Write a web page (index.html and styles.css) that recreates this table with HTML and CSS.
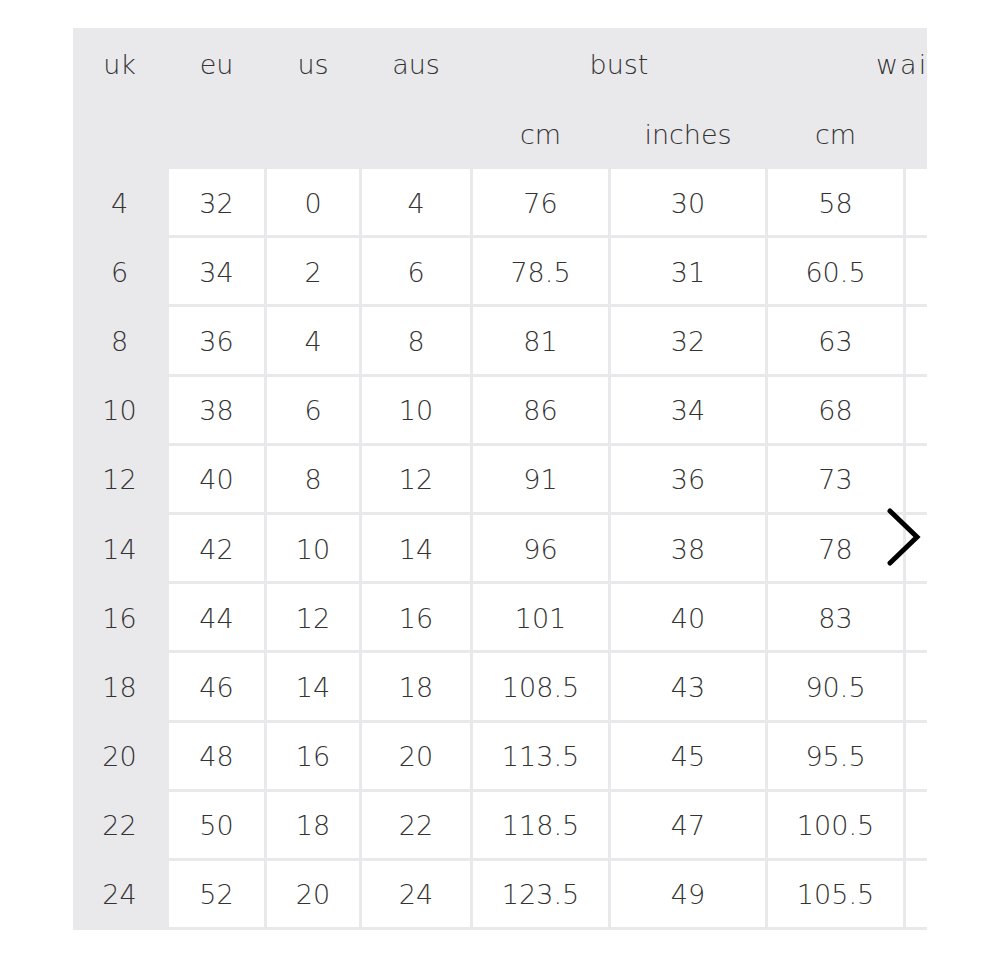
FILE: index.html
```html
<!DOCTYPE html>
<html>
<head>
<meta charset="utf-8">
<link rel="stylesheet" href="styles.css">
</head>
<body>
<div class="page">
  <div class="chart">
    <div class="grid">
      <div class="h h1">uk</div>
      <div class="h h1">eu</div>
      <div class="h h1">us</div>
      <div class="h h1">aus</div>
      <div class="h h1 span2">bust</div>
      <div class="h h1 span2 clip">wai</div>

      <div class="h h2"></div>
      <div class="h h2"></div>
      <div class="h h2"></div>
      <div class="h h2"></div>
      <div class="h h2">cm</div>
      <div class="h h2">inches</div>
      <div class="h h2">cm</div>
      <div class="h h2"></div>

      <div class="k">4</div><div class="c">32</div><div class="c">0</div><div class="c">4</div><div class="c">76</div><div class="c">30</div><div class="c">58</div><div class="c"></div>
      <div class="k">6</div><div class="c">34</div><div class="c">2</div><div class="c">6</div><div class="c">78.5</div><div class="c">31</div><div class="c">60.5</div><div class="c"></div>
      <div class="k">8</div><div class="c">36</div><div class="c">4</div><div class="c">8</div><div class="c">81</div><div class="c">32</div><div class="c">63</div><div class="c"></div>
      <div class="k">10</div><div class="c">38</div><div class="c">6</div><div class="c">10</div><div class="c">86</div><div class="c">34</div><div class="c">68</div><div class="c"></div>
      <div class="k">12</div><div class="c">40</div><div class="c">8</div><div class="c">12</div><div class="c">91</div><div class="c">36</div><div class="c">73</div><div class="c"></div>
      <div class="k">14</div><div class="c">42</div><div class="c">10</div><div class="c">14</div><div class="c">96</div><div class="c">38</div><div class="c">78</div><div class="c"></div>
      <div class="k">16</div><div class="c">44</div><div class="c">12</div><div class="c">16</div><div class="c">101</div><div class="c">40</div><div class="c">83</div><div class="c"></div>
      <div class="k">18</div><div class="c">46</div><div class="c">14</div><div class="c">18</div><div class="c">108.5</div><div class="c">43</div><div class="c">90.5</div><div class="c"></div>
      <div class="k">20</div><div class="c">48</div><div class="c">16</div><div class="c">20</div><div class="c">113.5</div><div class="c">45</div><div class="c">95.5</div><div class="c"></div>
      <div class="k">22</div><div class="c">50</div><div class="c">18</div><div class="c">22</div><div class="c">118.5</div><div class="c">47</div><div class="c">100.5</div><div class="c"></div>
      <div class="k">24</div><div class="c">52</div><div class="c">20</div><div class="c">24</div><div class="c">123.5</div><div class="c">49</div><div class="c">105.5</div><div class="c"></div>
    </div>
    <svg class="next" width="40" height="64" viewBox="0 0 40 64" aria-hidden="true">
      <polyline points="5,6 32,32 5,58" fill="none" stroke="#000" stroke-width="5" stroke-linecap="round" stroke-linejoin="miter"/>
    </svg>
  </div>
</div>
</body>
</html>
```

FILE: styles.css
```css
html, body {
  margin: 0;
  padding: 0;
  background: #ffffff;
}

.page {
  padding: 28px 0 0 73px;
}

.chart {
  position: relative;
  width: 854px;
  overflow: hidden;
  background: #e9e8eb;
}

.grid {
  display: grid;
  grid-template-columns: 93px 95px 92px 108px 135px 154px 135px 21px;
  grid-template-rows: 72px 63px repeat(11, 66.2px);
  gap: 3px;
  padding-bottom: 3px;
  font-family: "DejaVu Sans", "Liberation Sans", sans-serif;
  font-weight: 200;
  font-size: 27px;
  color: #333333;
}

.h, .k, .c {
  display: flex;
  align-items: center;
  justify-content: center;
  white-space: nowrap;
}

.k, .c {
  padding-top: 2px;
}

.span2 {
  grid-column: span 2;
}

.clip {
  justify-content: flex-start;
  padding-left: 108px;
  letter-spacing: 2px;
}

.c {
  background: #ffffff;
}

.next {
  position: absolute;
  left: 812px;
  top: 477px;
}
```
